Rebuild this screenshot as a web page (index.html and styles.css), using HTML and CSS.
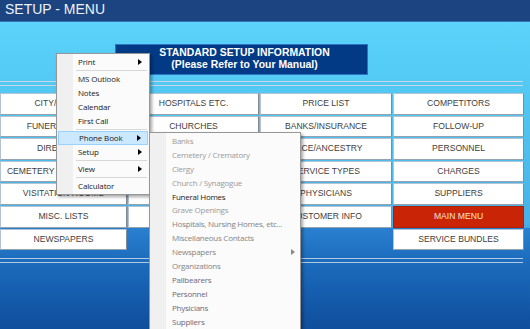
FILE: index.html
```html
<!DOCTYPE html>
<html lang="en">
  <head>
    <meta charset="UTF-8" />
    <title>Setup - Menu</title>
    <link rel="stylesheet" href="styles.css">
  </head>
  <body>
    <div class="titlebar">SETUP - MENU</div>

    <div class="main">
      <div class="infobox">
        STANDARD SETUP INFORMATION<br />
        (Please Refer to Your Manual)
      </div>

      <div class="rule"></div>

      <div class="grid">
        <div class="col col1">
          <div class="btn">CITY/COUNTY</div>
          <div class="btn">FUNERAL HOMES</div>
          <div class="btn">DIRECTIONS</div>
          <div class="btn">CEMETERY ASSOCIATIONS</div>
          <div class="btn">VISITATION ROOMS</div>
          <div class="btn">MISC. LISTS</div>
          <div class="btn">NEWSPAPERS</div>
        </div>
        <div class="col col2">
          <div class="btn">HOSPITALS ETC.</div>
          <div class="btn">CHURCHES</div>
          <div class="btn">FLORISTS</div>
          <div class="btn">CLERGY</div>
          <div class="btn">CEMETERIES</div>
          <div class="btn">ORGANIZATIONS</div>
        </div>
        <div class="col col3">
          <div class="btn">PRICE LIST</div>
          <div class="btn">BANKS/INSURANCE</div>
          <div class="btn">RACE/ANCESTRY</div>
          <div class="btn">SERVICE TYPES</div>
          <div class="btn">PHYSICIANS</div>
          <div class="btn">CUSTOMER INFO</div>
        </div>
        <div class="col col4">
          <div class="btn">COMPETITORS</div>
          <div class="btn">FOLLOW-UP</div>
          <div class="btn">PERSONNEL</div>
          <div class="btn">CHARGES</div>
          <div class="btn">SUPPLIERS</div>
          <div class="btn btn-red">MAIN MENU</div>
          <div class="btn">SERVICE BUNDLES</div>
        </div>
      </div>

      <div class="rule rule-bottom"></div>
    </div>

    <!-- context menu -->
    <div class="menu popup">
      <div class="item has-sub">Print</div>
      <div class="sep"></div>
      <div class="item">MS Outlook</div>
      <div class="item">Notes</div>
      <div class="item">Calendar</div>
      <div class="item">First Call</div>
      <div class="sep"></div>
      <div class="item has-sub active">Phone Book</div>
      <div class="item has-sub">Setup</div>
      <div class="sep"></div>
      <div class="item has-sub">View</div>
      <div class="sep"></div>
      <div class="item">Calculator</div>
    </div>

    <div class="menu submenu">
      <div class="item off">Banks</div>
      <div class="item off">Cemetery / Crematory</div>
      <div class="item off">Clergy</div>
      <div class="item off">Church / Synagogue</div>
      <div class="item">Funeral Homes</div>
      <div class="item off">Grave Openings</div>
      <div class="item dim">Hospitals, Nursing Homes, etc...</div>
      <div class="item dim">Miscellaneous Contacts</div>
      <div class="item dim has-sub">Newspapers</div>
      <div class="item dim">Organizations</div>
      <div class="item mid">Pallbearers</div>
      <div class="item mid">Personnel</div>
      <div class="item mid">Physicians</div>
      <div class="item mid">Suppliers</div>
    </div>
  </body>
</html>
```

FILE: styles.css
```css
body {
  margin: 0;
  width: 530px;
  height: 329px;
  overflow: hidden;
  font-family: "Liberation Sans", Arial, sans-serif;
  background: #0f4e9c;
  position: relative;
}

.titlebar {
  height: 22px;
  line-height: 19px;
  padding-left: 5px;
  background: #1c4481;
  border-bottom: 1px solid #3574b6;
  color: #eef2f8;
  font-size: 14px;
  box-sizing: border-box;
}

.main {
  height: 307px;
  background: linear-gradient(
    to bottom,
    #5bd3fa 0px,
    #52c8f3 70px,
    #47b1e8 200px,
    #43a8e4 206px,
    #2a80d0 206px,
    #1c6bbd 240px,
    #0f4e9c 307px
  );
  overflow: hidden;
}

.infobox {
  margin: 22px 0 0 115px;
  width: 253px;
  height: 31px;
  box-sizing: border-box;
  padding: 2px 0 0 6px;
  background: #023a86;
  border: 1px solid #2c73c4;
  color: #ffffff;
  font-weight: bold;
  font-size: 10.4px;
  line-height: 12px;
  text-align: center;
}

.rule {
  margin-top: 6px;
  width: 523px;
  height: 5px;
  box-sizing: border-box;
  border-top: 1px solid #c7d6e4;
  border-bottom: 1px solid #c7d6e4;
}

.rule-bottom {
  margin-top: 8px;
  border-color: #b3cbe2;
}

.grid {
  display: flex;
  gap: 1px;
  margin-top: 7px;
  width: 524px;
}

.col {
  display: flex;
  flex-direction: column;
  gap: 1px;
}

.col1 { width: 127px; }
.col2 { width: 131px; }
.col3 { width: 132px; }
.col4 { width: 131px; }

.btn {
  height: 21.6px;
  box-sizing: border-box;
  background: #ffffff;
  border: 1px solid #b3c3d2;
  border-right-color: #7f8c99;
  border-bottom-color: #95a3b1;
  color: #404040;
  font-size: 8.6px;
  line-height: 19.6px;
  text-align: center;
  white-space: nowrap;
  overflow: hidden;
}

.btn-red {
  background: #c92406;
  border-color: #b01e05;
  color: #fbe2da;
}

/* popup menus */
.menu {
  position: absolute;
  box-sizing: border-box;
  background: linear-gradient(to right, #f0f0f0 16px, #fbfbfb 16px);
  border: 1px solid #979797;
  box-shadow: 2px 2px 3px rgba(0, 0, 0, 0.35);
  font-family: "Open Sans", "Noto Sans", sans-serif;
  font-size: 8px;
  letter-spacing: -0.15px;
  color: #1a1a1a;
  padding: 1px 0;
}

.popup {
  left: 56px;
  top: 53px;
  width: 94px;
}

.submenu {
  left: 149px;
  top: 132px;
  width: 152px;
  height: 198px;
  letter-spacing: -0.25px;
}

.item {
  position: relative;
  height: 14px;
  line-height: 14px;
  padding-left: 21px;
  white-space: nowrap;
  box-sizing: border-box;
}

.submenu .item {
  height: 13.9px;
  line-height: 13.9px;
  padding-left: 22px;
}

.item.active {
  margin: 0 1px;
  padding-left: 20px;
  background: #cce8ff;
  border: 1px solid #99d1ff;
  line-height: 12px;
}

.has-sub::after {
  content: "";
  position: absolute;
  right: 7px;
  top: 4px;
  border-left: 4px solid #000;
  border-top: 3px solid transparent;
  border-bottom: 3px solid transparent;
}

.item.active::after {
  right: 6px;
  top: 3px;
}

.submenu .has-sub::after {
  right: 5px;
  border-left-color: #8a8a8a;
}

.sep {
  height: 1px;
  margin: 1px 2px 1px 19px;
  background: #d7d7d7;
}

.item.off { color: #9a9a9a; }
.item.dim { color: #848484; }
.item.mid { color: #6c6878; }
```
